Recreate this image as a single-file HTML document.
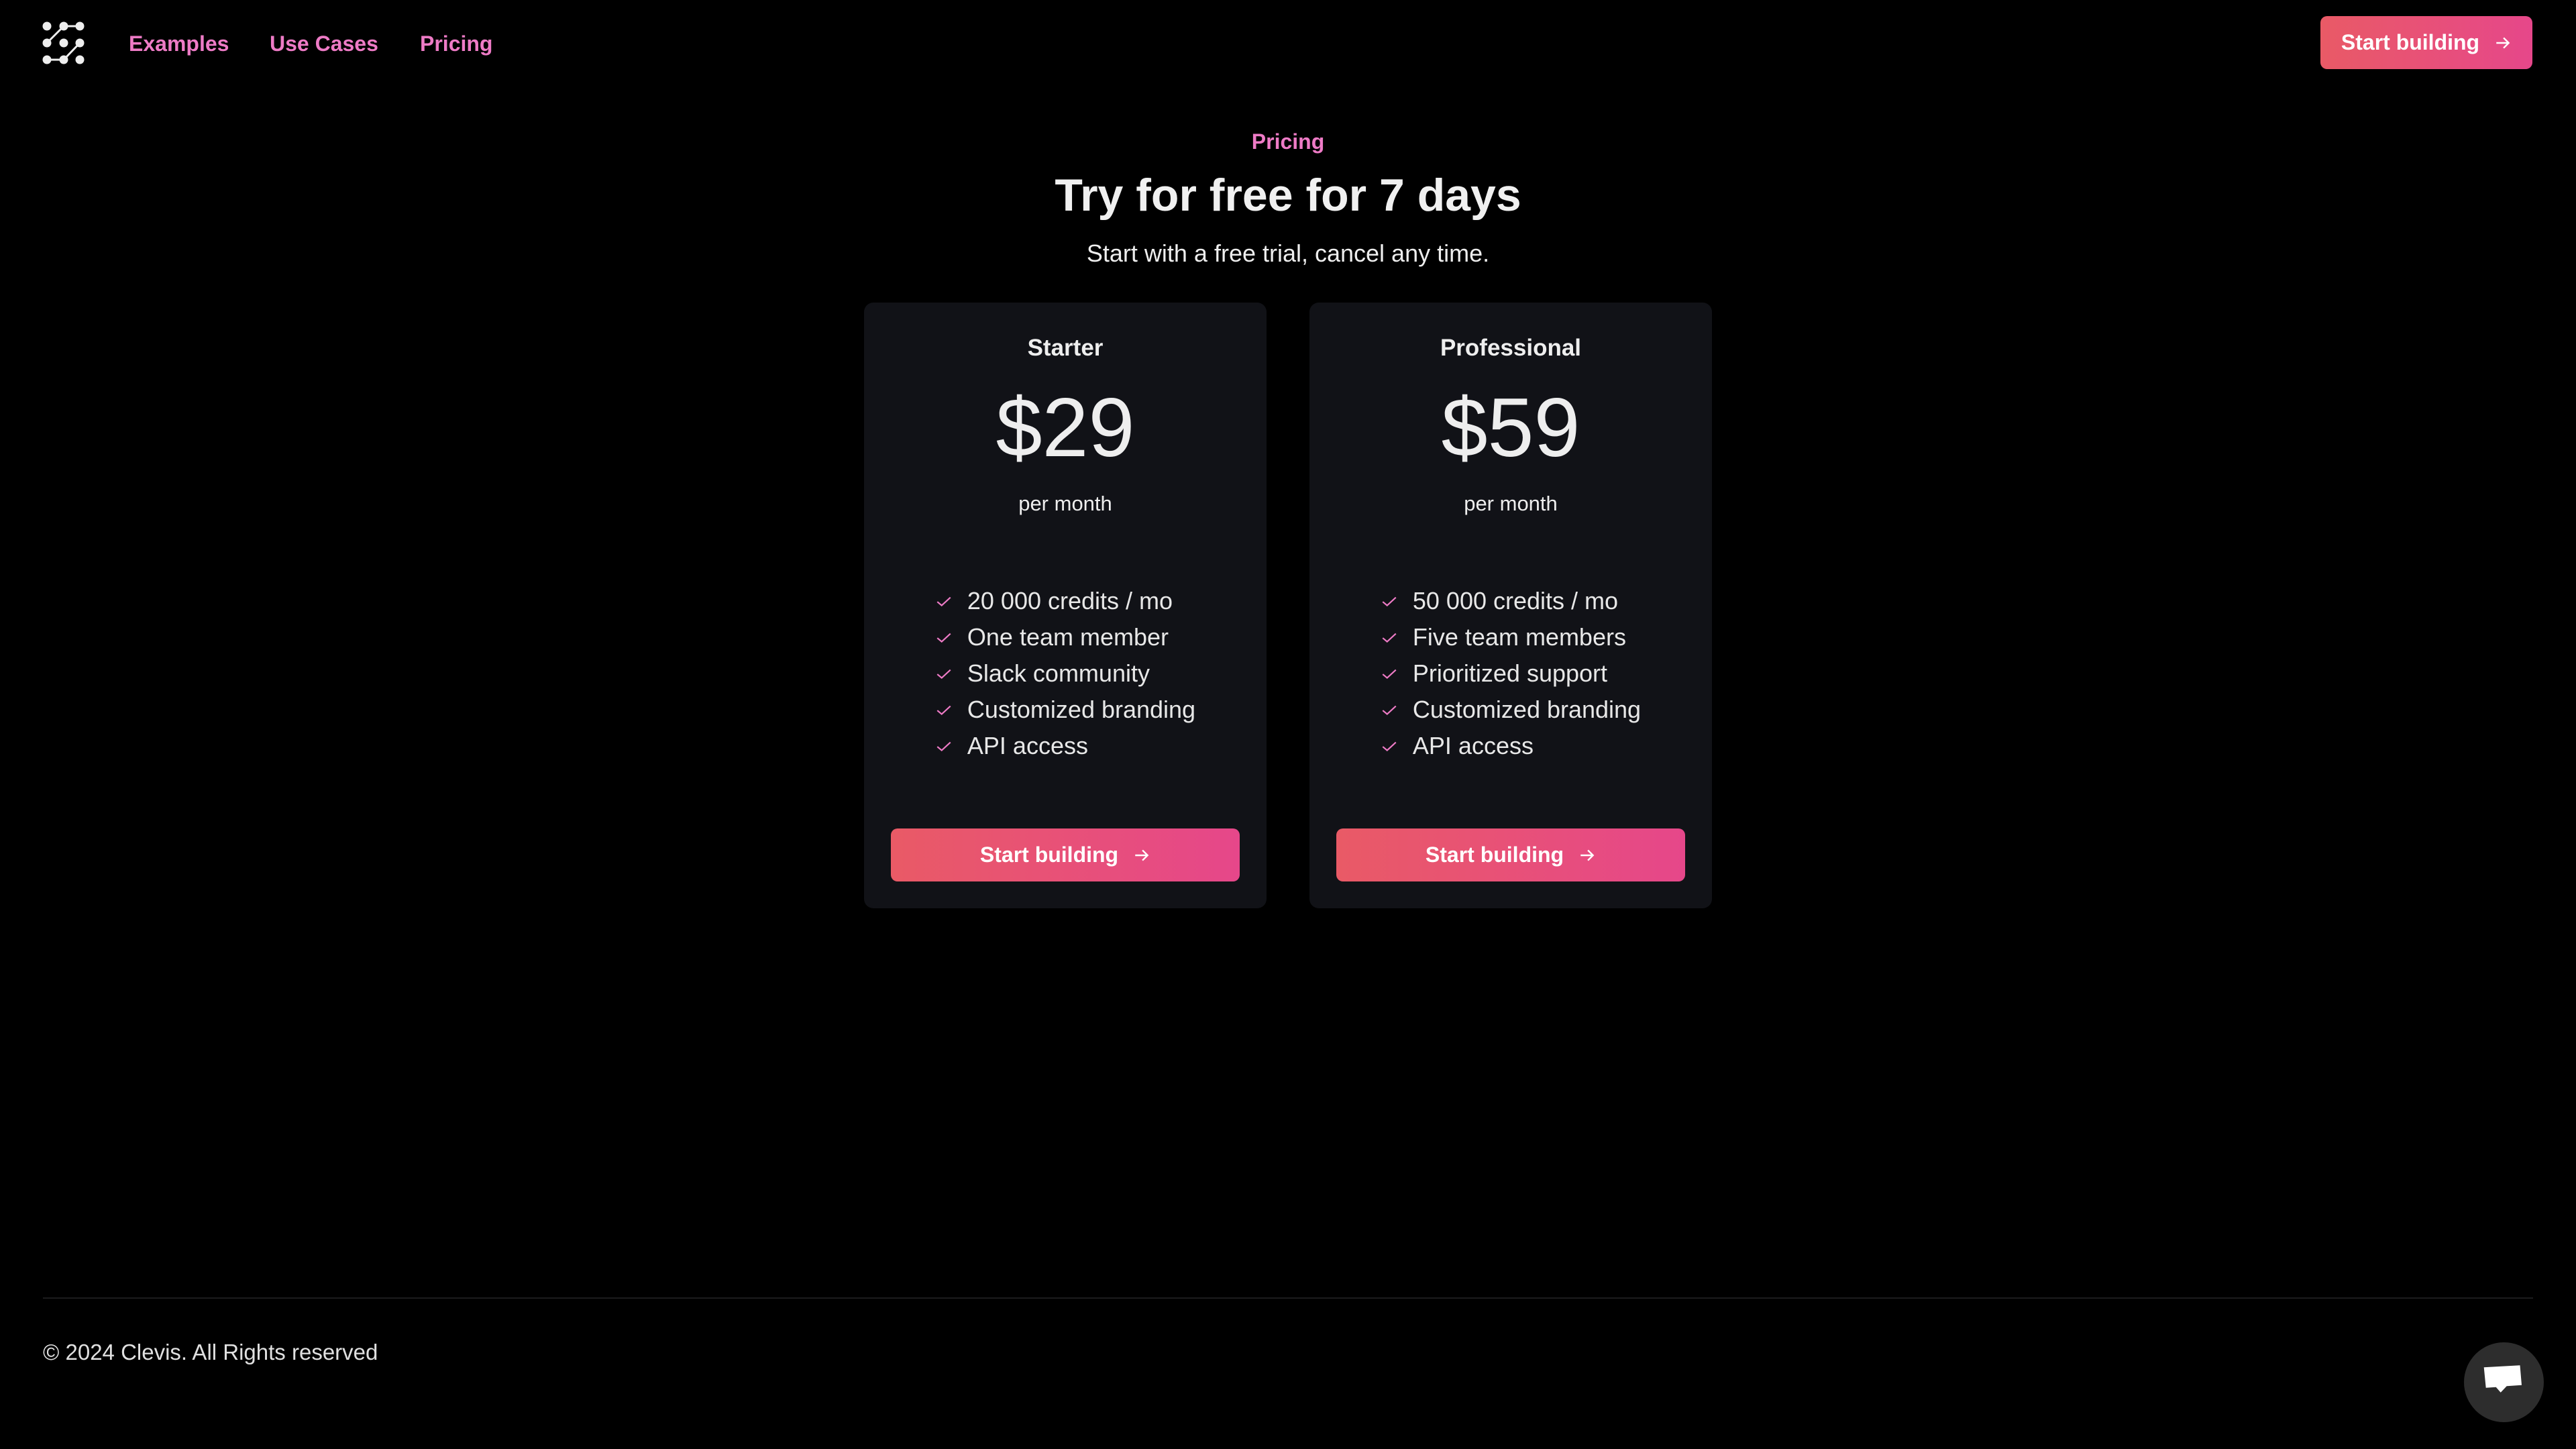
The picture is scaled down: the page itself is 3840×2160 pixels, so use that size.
<!DOCTYPE html>
<html><head><meta charset="utf-8"><style>
*{margin:0;padding:0;box-sizing:border-box}
body{width:3840px;height:2160px;background:#000;color:#eee;font-family:"Liberation Sans",sans-serif;position:relative;overflow:hidden}
.nav a{position:absolute;top:45px;font-size:32px;font-weight:600;color:#ee7bc6;text-decoration:none;line-height:40px}
.btn{position:absolute;display:flex;align-items:center;justify-content:center;gap:22px;color:#fff;font-weight:700;font-size:32px;background:linear-gradient(90deg,#e95a66,#e6478a);border-radius:10px}
.card{position:absolute;top:451px;width:600px;height:903px;background:#111217;border-radius:14px}
.ct{position:absolute;width:100%;text-align:center}
.list{position:absolute;left:0;width:100%;text-align:center}
.list ul{display:inline-block;text-align:left;list-style:none}
.list li{font-size:36px;line-height:54px;color:#e8e8e8;display:flex;align-items:center}
.list li svg{margin-right:22px}
</style></head><body>
<svg style="position:absolute;left:58px;top:27px" width="75" height="75" viewBox="58 27 75 75">
<g stroke="#eee" stroke-width="3"><line x1="95" y1="39" x2="119" y2="39"/><line x1="70" y1="64" x2="95" y2="39"/><line x1="119" y1="64" x2="95" y2="89"/><line x1="70" y1="89" x2="95" y2="89"/></g>
<g fill="#eee"><circle cx="70" cy="39" r="6.5"/><circle cx="95" cy="39" r="6.5"/><circle cx="119" cy="39" r="6.5"/><circle cx="70" cy="64" r="6.5"/><circle cx="95" cy="64" r="6.5"/><circle cx="119" cy="64" r="6.5"/><circle cx="70" cy="89" r="6.5"/><circle cx="95" cy="89" r="6.5"/><circle cx="119" cy="89" r="6.5"/></g></svg>
<div class="nav"><a style="left:192px">Examples</a><a style="left:402px">Use Cases</a><a style="left:626px">Pricing</a></div>
<div class="btn" style="left:3459px;top:24px;width:316px;height:79px">Start building <svg width="26" height="26" viewBox="0 0 24 24" fill="none" stroke="#fff" stroke-width="2.2"><path d="M3 12h17M13 5l7 7-7 7"/></svg></div>
<div class="ct" style="top:193px;font-size:32px;font-weight:700;color:#ee7bc6">Pricing</div>
<div class="ct" style="top:252px;font-size:68px;font-weight:700;color:#f0f0f0">Try for free for 7 days</div>
<div class="ct" style="top:357px;font-size:36px;color:#eee">Start with a free trial, cancel any time.</div>

<div class="card" style="left:1288px">
<div class="ct" style="top:48px;font-size:35px;font-weight:700">Starter</div>
<div class="ct" style="top:117px;font-size:124px;line-height:140px">$29</div>
<div class="ct" style="top:282px;font-size:31px">per month</div>
<div class="list" style="top:418px"><ul>
<li><svg width="26" height="26" viewBox="0 0 24 24" fill="none" stroke="#ee7bc6" stroke-width="2"><path d="M3 13l6 5L21 7"/></svg>20 000 credits / mo</li>
<li><svg width="26" height="26" viewBox="0 0 24 24" fill="none" stroke="#ee7bc6" stroke-width="2"><path d="M3 13l6 5L21 7"/></svg>One team member</li>
<li><svg width="26" height="26" viewBox="0 0 24 24" fill="none" stroke="#ee7bc6" stroke-width="2"><path d="M3 13l6 5L21 7"/></svg>Slack community</li>
<li><svg width="26" height="26" viewBox="0 0 24 24" fill="none" stroke="#ee7bc6" stroke-width="2"><path d="M3 13l6 5L21 7"/></svg>Customized branding</li>
<li><svg width="26" height="26" viewBox="0 0 24 24" fill="none" stroke="#ee7bc6" stroke-width="2"><path d="M3 13l6 5L21 7"/></svg>API access</li>
</ul></div>
<div class="btn" style="left:40px;top:784px;width:520px;height:79px">Start building <svg width="26" height="26" viewBox="0 0 24 24" fill="none" stroke="#fff" stroke-width="2.2"><path d="M3 12h17M13 5l7 7-7 7"/></svg></div>
</div>

<div class="card" style="left:1952px">
<div class="ct" style="top:48px;font-size:35px;font-weight:700">Professional</div>
<div class="ct" style="top:117px;font-size:124px;line-height:140px">$59</div>
<div class="ct" style="top:282px;font-size:31px">per month</div>
<div class="list" style="top:418px"><ul>
<li><svg width="26" height="26" viewBox="0 0 24 24" fill="none" stroke="#ee7bc6" stroke-width="2"><path d="M3 13l6 5L21 7"/></svg>50 000 credits / mo</li>
<li><svg width="26" height="26" viewBox="0 0 24 24" fill="none" stroke="#ee7bc6" stroke-width="2"><path d="M3 13l6 5L21 7"/></svg>Five team members</li>
<li><svg width="26" height="26" viewBox="0 0 24 24" fill="none" stroke="#ee7bc6" stroke-width="2"><path d="M3 13l6 5L21 7"/></svg>Prioritized support</li>
<li><svg width="26" height="26" viewBox="0 0 24 24" fill="none" stroke="#ee7bc6" stroke-width="2"><path d="M3 13l6 5L21 7"/></svg>Customized branding</li>
<li><svg width="26" height="26" viewBox="0 0 24 24" fill="none" stroke="#ee7bc6" stroke-width="2"><path d="M3 13l6 5L21 7"/></svg>API access</li>
</ul></div>
<div class="btn" style="left:40px;top:784px;width:520px;height:79px">Start building <svg width="26" height="26" viewBox="0 0 24 24" fill="none" stroke="#fff" stroke-width="2.2"><path d="M3 12h17M13 5l7 7-7 7"/></svg></div>
</div>

<div style="position:absolute;left:64px;top:1934px;width:3712px;height:2px;background:#1c1c1e"></div>
<div style="position:absolute;left:64px;top:1996px;font-size:33px;color:#e0e0e0;line-height:40px">© 2024 Clevis. All Rights reserved</div>
<div style="position:absolute;left:3673px;top:2001px;width:119px;height:119px;border-radius:50%;background:#2d2d2d"></div>
<svg style="position:absolute;left:3700px;top:2030px" width="64" height="64" viewBox="0 0 64 64"><path d="M2.7 8.2L56.5 5.3 59 34.7 36.7 36.3 27.7 45.7 20.7 37.8 5.7 38.7Z" fill="#fff"/></svg>
</body></html>
